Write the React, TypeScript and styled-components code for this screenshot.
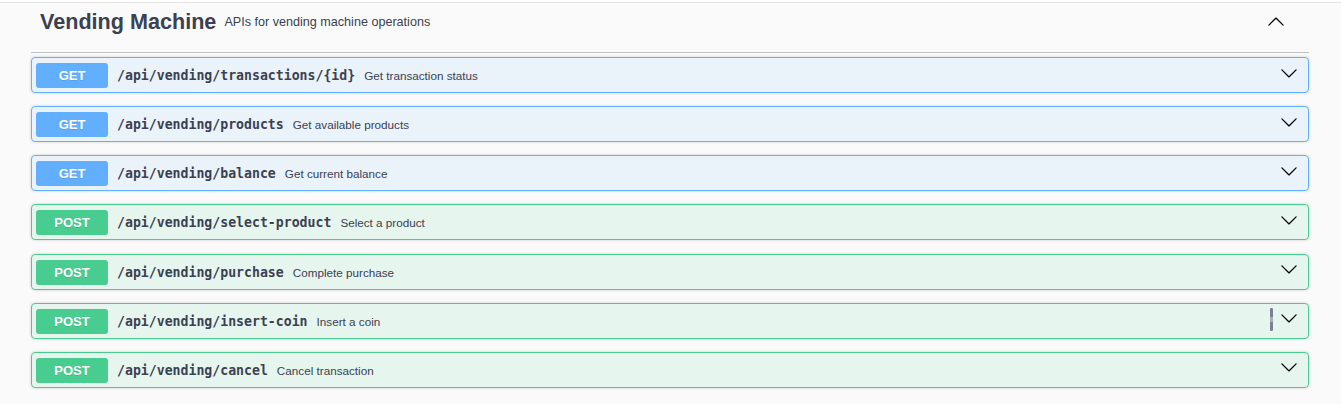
import React from "react";
import styled, { createGlobalStyle } from "styled-components";

const GlobalStyle = createGlobalStyle`
  html, body {
    margin: 0;
    padding: 0;
    background: #fafafa;
  }
  body {
    font-family: "Liberation Sans", Arial, sans-serif;
    color: #3b4151;
  }
  * { box-sizing: border-box; }
`;

type Method = "get" | "post";

const palette: Record<Method, { main: string; bg: string }> = {
  get: { main: "#61affe", bg: "rgba(97,175,254,.1)" },
  post: { main: "#49cc90", bg: "rgba(73,204,144,.1)" },
};

const Page = styled.div`
  width: 1341px;
  min-height: 404px;
  background: #fafafa;
`;

const PrevEdge = styled.div`
  height: 3px;
  background: #ffffff;
  border-bottom: 1px solid #e4e4e4;
`;

const Section = styled.section`
  margin: 0 32px 0 31px;
`;

const TagHeader = styled.h3`
  margin: 0;
  display: flex;
  align-items: center;
  height: 50px;
  padding: 0 24px 11px 9px;
  border-bottom: 1px solid rgba(59, 65, 81, 0.3);
  font-weight: normal;
`;

const TagTitle = styled.span`
  font-family: "Liberation Sans", Arial, sans-serif;
  font-size: 21.6px;
  font-weight: 700;
  color: #3b4151;
`;

const TagDesc = styled.small`
  margin-left: 8px;
  font-family: "Liberation Sans", Arial, sans-serif;
  font-size: 12.6px;
  color: #3b4151;
  flex: 1;
`;

const Ops = styled.div`
  display: flex;
  flex-direction: column;
  gap: 13.17px;
  padding-top: 4px;
`;

const OpBlock = styled.div<{ $m: Method }>`
  display: flex;
  align-items: center;
  height: 36px;
  padding: 5px 10px 4px 4px;
  border: 1px solid ${(p) => palette[p.$m].main};
  background: ${(p) => palette[p.$m].bg};
  border-radius: 4px;
  box-shadow: 0 0 3px rgba(0, 0, 0, 0.19);
`;

const MethodBadge = styled.span<{ $m: Method }>`
  display: flex;
  align-items: center;
  justify-content: center;
  width: 72px;
  height: 25px;
  border-radius: 3px;
  background: ${(p) => palette[p.$m].main};
  color: #fff;
  font-family: "Liberation Sans", Arial, sans-serif;
  font-size: 13px;
  font-weight: 700;
  text-shadow: 0 1px 0 rgba(0, 0, 0, 0.1);
  flex: none;
`;

const Path = styled.span`
  padding: 0 9px 0 9px;
  font-family: "DejaVu Sans Mono", monospace;
  font-size: 13.2px;
  font-weight: 700;
  color: #3b4151;
  white-space: nowrap;
`;

const Summary = styled.span`
  flex: 1;
  font-family: "Liberation Sans", Arial, sans-serif;
  font-size: 11.7px;
  color: #3b4151;
`;

const CursorBar = styled.span`
  width: 3px;
  height: 23px;
  margin-right: 7px;
  margin-bottom: 3px;
  border-radius: 1px;
  background: linear-gradient(
    #7b8192 0,
    #7b8192 40%,
    #a6abb7 40%,
    #a6abb7 62%,
    #7b8192 62%
  );
`;

const Chevron = styled.svg<{ $up?: boolean }>`
  width: 18px;
  height: 18px;
  flex: none;
  margin-bottom: 6px;
  transform: ${(p) => (p.$up ? "rotate(180deg)" : "none")};
`;

const Arrow = ({ up }: { up?: boolean }) => (
  <Chevron $up={up} viewBox="0 0 20 20" aria-hidden="true">
    <path
      fill="#000"
      d="M17.418 6.109c.272-.268.709-.268.979 0s.271.701 0 .969l-7.908 7.83c-.27.268-.707.268-.979 0l-7.908-7.83c-.27-.268-.27-.701 0-.969.271-.268.709-.268.979 0L10 13.25l7.418-7.141z"
    />
  </Chevron>
);

const HeaderArrow = styled.span`
  display: flex;
  margin-top: 5px;
`;

const ops: { m: Method; path: string; summary: string; bar?: boolean }[] = [
  { m: "get", path: "/api/vending/transactions/{id}", summary: "Get transaction status" },
  { m: "get", path: "/api/vending/products", summary: "Get available products" },
  { m: "get", path: "/api/vending/balance", summary: "Get current balance" },
  { m: "post", path: "/api/vending/select-product", summary: "Select a product" },
  { m: "post", path: "/api/vending/purchase", summary: "Complete purchase" },
  { m: "post", path: "/api/vending/insert-coin", summary: "Insert a coin", bar: true },
  { m: "post", path: "/api/vending/cancel", summary: "Cancel transaction" },
];

export default function App() {
  return (
    <Page>
      <GlobalStyle />
      <PrevEdge />
      <Section>
        <TagHeader>
          <TagTitle>Vending Machine</TagTitle>
          <TagDesc>APIs for vending machine operations</TagDesc>
          <HeaderArrow>
            <Arrow up />
          </HeaderArrow>
        </TagHeader>
        <Ops>
          {ops.map((o) => (
            <OpBlock key={o.path} $m={o.m}>
              <MethodBadge $m={o.m}>{o.m.toUpperCase()}</MethodBadge>
              <Path>{o.path}</Path>
              <Summary>{o.summary}</Summary>
              {o.bar && <CursorBar />}
              <Arrow />
            </OpBlock>
          ))}
        </Ops>
      </Section>
    </Page>
  );
}
